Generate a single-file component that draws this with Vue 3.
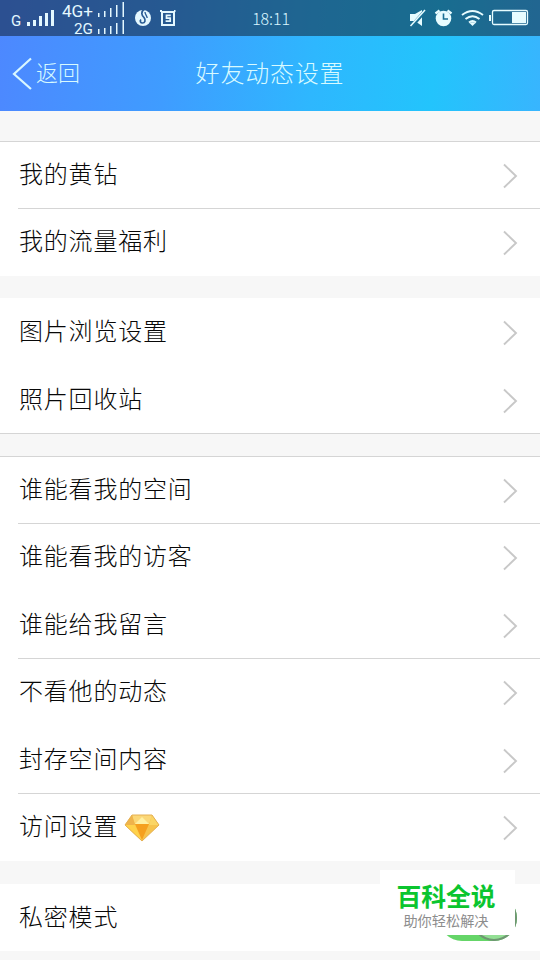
<script setup>
const groups = [
  { rows: [
    { label: '我的黄钻', line: 'full' },
    { label: '我的流量福利', line: 'inset', tall: true },
  ] },
  { closed: true, rows: [
    { label: '图片浏览设置', tall: true },
    { label: '照片回收站', tall: true },
  ] },
  { rows: [
    { label: '谁能看我的空间', line: 'full' },
    { label: '谁能看我的访客', line: 'inset', tall: true },
    { label: '谁能给我留言' },
    { label: '不看他的动态', line: 'inset', tall: true },
    { label: '封存空间内容' },
    { label: '访问设置', line: 'inset', tall: true, gem: true },
  ] },
  { rows: [{ label: '私密模式', toggle: true }] },
]
</script>

<template>
  <main class="screen">
    <header class="top">
      <div class="status">
        <svg class="status-left" width="180" height="36" viewBox="0 0 180 36" fill="#e4f8ff">
          <text x="11" y="26" font-size="15">G</text>
          <path d="M27 22h3v4h-3zM33 20h3v6h-3zM39 16h3v10h-3zM45 13h3v13h-3zM51 10h3v16h-3z" />
          <text x="62" y="17" font-size="16" textLength="31" lengthAdjust="spacingAndGlyphs">4G+</text>
          <text x="74" y="33.500" font-size="15" textLength="19" lengthAdjust="spacingAndGlyphs">2G</text>
          <path d="M98 13h1.500v4h-1.500zM104 11h1.500v6h-1.500zM110 8h1.500v9h-1.500zM116 5h1.500v12h-1.500zM122.500 2h1.500v15h-1.500zM98 29h1.500v5h-1.500zM104 28h1.500v6h-1.500zM110 26h1.500v8h-1.500zM116 23h1.500v11h-1.500zM122.500 20h1.500v14h-1.500z" />
          <circle cx="143" cy="18" r="8" />
          <path d="M144.500 9c-4 3-3 6-.5 8.500 2 2.500 1 5.500-1.500 5.500-2 0-3-2-1.500-3.500" fill="none" stroke="#285b94" stroke-width="1.700" />
          <path d="M145 12c0 2.500 2 3.500 2.200 6" fill="none" stroke="#285b94" stroke-width="1.300" />
          <path d="M162 12h12v13h-12z" fill="none" stroke="#e4f8ff" stroke-width="2" />
          <path d="M160 10h2v2h-2zM174 10h1.500v2H174z" />
          <path d="M170.800 15.300h-4.300v2.900h3.700v3h-4.600" fill="none" stroke="#e4f8ff" stroke-width="1.700" />
        </svg>
        <time class="clock">18:11</time>
        <svg class="status-right" width="140" height="36" viewBox="0 0 140 36" fill="none" stroke="#e7fcff">
          <path d="M10 14h5l7-4v16l-7-5h-5z" fill="#e7fcff" stroke="none" />
          <path d="M11.500 26.500 25.500 10.500" stroke="#1a6f94" stroke-width="3.500" />
          <path d="M10.500 26 25 10" stroke-width="1.500" />
          <circle cx="43.500" cy="18.500" r="7.800" fill="#e7fcff" stroke="none" />
          <path d="M35.500 13.500l4-3M47.500 10.500l4 3" stroke-width="2.300" />
          <path d="M43.500 13.500v5.500h4.500" stroke="#1a6f94" stroke-width="1.600" />
          <path d="M62 15q10.500-8 21 0M65.500 19q7-5.500 14 0M69 22.500q3.500-2.700 7 0" stroke-width="2" />
          <path d="M69.500 23q3-1.500 6 0l-3 3z" fill="#e7fcff" stroke="none" />
          <rect x="92.500" y="10.500" width="35" height="14" rx="1.500" stroke-width="1.300" />
          <path d="M112 12h14v11h-14zM89 15h2v6h-2z" fill="#e7fcff" stroke="none" />
        </svg>
      </div>
      <nav class="nav">
        <div class="back">
          <svg width="20" height="34" viewBox="0 0 20 34"><path d="M19 1.500 2 17l17 15" fill="none" stroke="#d9f7ff" stroke-width="2.200" /></svg>
          <span>返回</span>
        </div>
        <h1>好友动态设置</h1>
        <div />
      </nav>
    </header>
    <section v-for="(group, i) in groups" :key="i" class="group" :class="{ closed: group.closed }">
      <div v-for="row in group.rows" :key="row.label" class="row" :class="[row.line, { tall: row.tall }]">
        <div class="content">
          <span class="label">{{ row.label }}</span>
          <svg v-if="row.gem" class="gem" width="36" height="28" viewBox="0 0 36 28">
            <path d="M8 1h20l7 10-17 16L1 11z" fill="#f6c34d" />
            <path d="M8 1h20l-3 9H11z" fill="#fbd777" />
            <path d="m8 1-7 10h10z" fill="#efb34b" /><path d="m28 1 7 10H25z" fill="#fad565" />
            <path d="M11 10h14l-7 16z" fill="#f5a01f" /><path d="m11 10 7-7 7 7z" fill="#fff0a2" />
            <path d="M1 11h10l7 16z" fill="#ffd24a" />
            <path d="M8 1h20l7 10-17 16L1 11z" fill="none" stroke="#e5b052" stroke-width="1" />
          </svg>
          <span v-if="row.toggle" class="toggle"><i /></span>
          <svg v-else class="arrow" width="16" height="26" viewBox="0 0 16 26"><path d="m2 1.500 12 11.500-12 11.500" fill="none" stroke="#c8c8c8" stroke-width="1.900" /></svg>
        </div>
      </div>
    </section>
    <aside class="watermark">
      <strong>百科全说</strong>
      <span>助你轻松解决</span>
    </aside>
  </main>
</template>

<style>
body { margin: 0; background: #f7f7f7; }
</style>

<style scoped>
.screen { position: relative; width: 540px; height: 960px; overflow: hidden; background: #f7f7f7; font-family: "Noto Sans CJK SC", sans-serif; font-weight: 300; color: #080808; }
.top { height: 111px; margin-bottom: 30px; background: linear-gradient(95deg, #4d88ff 0%, #3f9cff 31%, #2eb7fe 58%, #23c4fc 80%, #38b5fe 100%); }
.status { height: 36px; display: grid; grid-template-columns: 200px 142px 198px; background: rgba(15, 29, 45, .52); }
.status-left { font-family: Roboto, sans-serif; font-weight: 400; }
.status-right { justify-self: end; width: 140px; }
.clock { text-align: center; font: 300 16px/36px "Noto Sans CJK SC", sans-serif; color: #daf6ff; letter-spacing: -.1px; }
.nav { height: 75px; display: grid; grid-template-columns: 170px 200px 170px; align-items: center; color: #d8faff; }
.back { display: flex; align-items: center; gap: 4px; padding-left: 12px; font-size: 22px; line-height: 34px; }
.back span { padding-bottom: 5px; }
h1 { margin: 0; padding-bottom: 4px; font-size: 24px; line-height: 34px; font-weight: 300; letter-spacing: .8px; text-align: center; white-space: nowrap; }
.group { margin-bottom: 22px; background: #fff; }
.closed { border-bottom: 1px solid #d5d5d5; }
.closed .row:last-child { height: 67px; }
.group:nth-of-type(3) { margin-bottom: 23px; }
.row { box-sizing: border-box; height: 67px; padding-left: 18px; }
.tall { height: 68px; }
.content { box-sizing: border-box; height: 100%; display: flex; align-items: center; border-top: 1px solid transparent; padding-right: 22px; }
.full { border-top: 1px solid #d5d5d5; }
.full .content { border-top: 0; }
.inset .content { border-top-color: #d5d5d5; }
.label { font-size: 24px; line-height: 34px; letter-spacing: .8px; padding: 0 0 5px 1px; }
.gem { margin: 0 0 0 6px; }
.arrow { margin: 1px 0 0 auto; }
.toggle { box-sizing: border-box; width: 78px; height: 46px; margin: 0 1px 0 auto; border-radius: 23px; background: #65d568; display: flex; justify-content: flex-end; }
.toggle i { box-sizing: border-box; width: 46px; height: 46px; border: 2px solid #6f9672; border-radius: 50%; background: #93df94; }
.watermark { position: absolute; left: 380px; top: 870px; box-sizing: border-box; width: 135px; height: 65px; padding: 7px 3px 0 0; background: #fff; display: flex; flex-direction: column; align-items: center; white-space: nowrap; }
.watermark strong { color: #0bc52f; font-size: 24.800px; line-height: 36px; font-weight: 700; }
.watermark span { color: #8d8d8d; font-size: 14.200px; line-height: 14px; font-weight: 400; }
</style>
